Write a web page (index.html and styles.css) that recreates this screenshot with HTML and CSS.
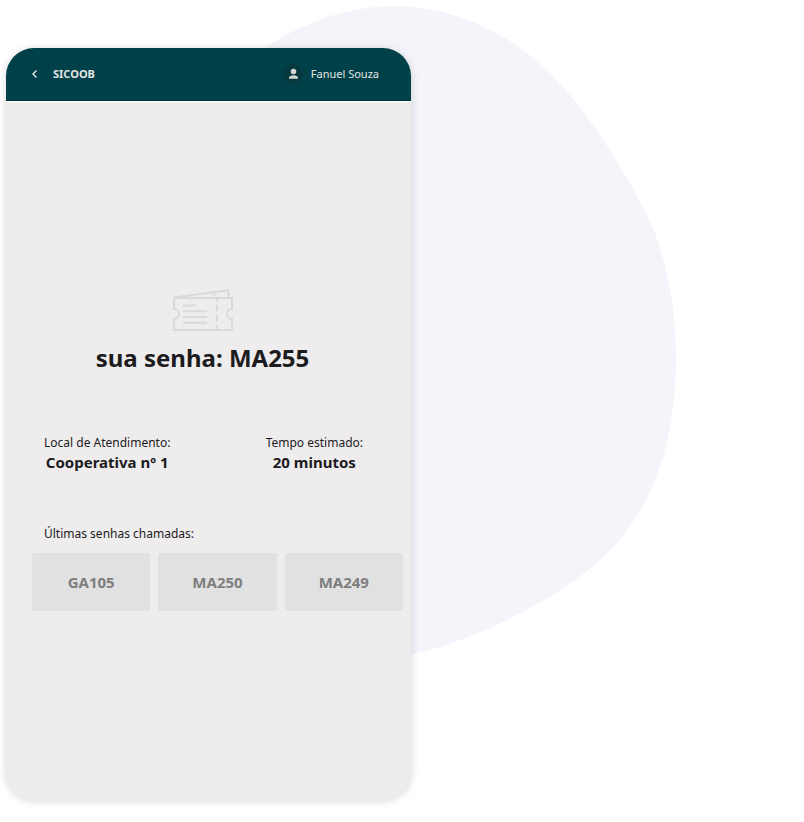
FILE: index.html
```html
<!DOCTYPE html>
<html lang="pt-BR">
<head>
<meta charset="utf-8">
<meta name="viewport" content="width=device-width, initial-scale=1">
<title>SICOOB</title>
<link rel="stylesheet" href="styles.css">
</head>
<body>
<div class="stage">
  <svg class="blob" width="804" height="680" viewBox="0 0 804 680" aria-hidden="true">
    <path d="M240 66C285 29 340 6 395 6C436 6 477 20 513 43C566 77 611 146 646 213C665 249 676 306 676 356C676 430 660 492 618 542C580 587 482 642 400 657L240 640Z" fill="#f4f5fb"/>
  </svg>
  <main class="phone">
    <header class="bar">
      <button class="back" type="button" aria-label="Voltar">
        <svg width="8" height="10" viewBox="0 0 8 10"><path d="M6.500 1.500L3 5L6.500 8.500" fill="none" stroke="currentColor" stroke-width="1.400"/></svg>
      </button>
      <h1 class="brand">SICOOB</h1>
      <div class="user">
        <span class="avatar">
          <svg width="20" height="20" viewBox="0 0 20 20" aria-hidden="true"><circle cx="10.500" cy="7.500" r="2.800"/><path d="M6 14.700V13.900C6 12.200 8.300 11.300 10.500 11.300S15 12.200 15 13.900V14.700Z"/></svg>
        </span>
        <span>Fanuel Souza</span>
      </div>
    </header>
    <section class="ticket">
      <svg width="62" height="42" viewBox="0 0 62 42" fill="none" stroke="#dadada" stroke-width="2" aria-hidden="true">
        <path d="M2 9H60V20A5 5 0 0 0 60 30V41H2V30A5 5 0 0 0 2 20Z"/>
        <path d="M2 8.500L56 1.200L57 9M42 3.500L42.500 7"/>
        <path d="M11 16.500H24M11 22.300H35M11 28H35M11 33.700H35"/>
        <path d="M45 9.500V13M45 16V22.500M45 26V32.500M45 36V40"/>
      </svg>
      <h2>sua senha: MA255</h2>
    </section>
    <dl class="details">
      <div><dt>Local de Atendimento:</dt><dd>Cooperativa nº 1</dd></div>
      <div><dt>Tempo estimado:</dt><dd>20 minutos</dd></div>
    </dl>
    <section class="recent">
      <h3>Últimas senhas chamadas:</h3>
      <ul>
        <li>GA105</li>
        <li>MA250</li>
        <li>MA249</li>
      </ul>
    </section>
  </main>
</div>
</body>
</html>
```

FILE: styles.css
```css
* { box-sizing: border-box; }

body {
  margin: 0;
  background: #fff;
  color: #1c1b1d;
  font-family: "Noto Sans", "Open Sans", sans-serif;
}

h1, h2, h3, dl, dd, ul { margin: 0; padding: 0; }

.stage {
  position: relative;
  padding: 48px 6px 22px;
  overflow: hidden;
}

.blob {
  position: absolute;
  top: 0;
  left: 0;
}

.phone {
  position: relative;
  max-width: 405px;
  padding-bottom: 189px;
  border-radius: 28px;
  background: #eeeced;
  box-shadow: 0 1px 8px rgba(0, 0, 0, 0.16);
  overflow: hidden;
}

.bar {
  display: flex;
  align-items: center;
  height: 53px;
  padding: 0 32px 0 24px;
  border-bottom: 1px solid #003038;
  background: #004149;
  color: #e3e5e5;
  box-shadow: 0 1px 0 #fff;
}

.back {
  display: flex;
  padding: 0;
  border: 0;
  background: none;
  color: inherit;
}

.brand {
  margin-left: 15px;
  font-size: 11px;
  line-height: 16px;
}

.user {
  display: flex;
  align-items: center;
  gap: 8px;
  margin-left: auto;
  font-size: 11px;
  line-height: 16px;
}

.avatar {
  display: flex;
  border-radius: 50%;
  background: #07383e;
  fill: #d6d6d5;
}

.ticket {
  display: flex;
  flex-direction: column;
  align-items: center;
  padding-top: 188px;
  padding-right: 12px;
}

.ticket h2 {
  margin-top: 7px;
  font-size: 24px;
  line-height: 40px;
}

.details {
  display: flex;
  justify-content: space-between;
  margin-top: 55px;
  padding: 0 48px 0 38px;
  text-align: center;
}

.details dt {
  font-size: 12px;
  line-height: 20px;
}

.details dd {
  font-size: 15px;
  font-weight: 700;
  line-height: 18px;
}

.recent {
  margin-top: 53px;
  padding: 0 8px 0 26px;
}

.recent h3 {
  padding-left: 12px;
  font-size: 12px;
  font-weight: 400;
  line-height: 20px;
}

.recent ul {
  display: grid;
  grid-template-columns: repeat(3, 1fr);
  gap: 8px;
  margin-top: 9px;
  list-style: none;
}

.recent li {
  border-radius: 3px;
  background: #e1e1e1;
  color: #7e7e7e;
  font-size: 15px;
  font-weight: 700;
  line-height: 58px;
  text-align: center;
}
```
